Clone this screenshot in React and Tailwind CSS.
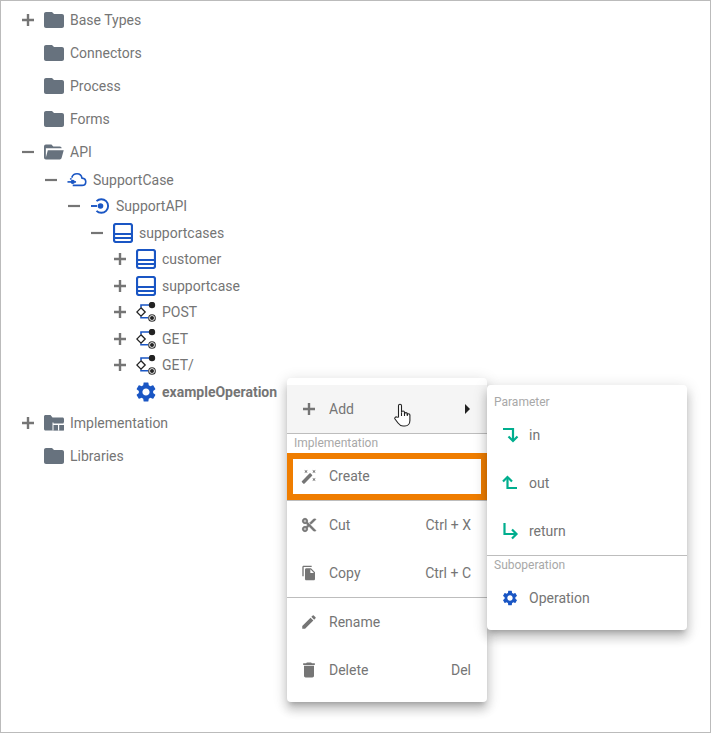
import React from 'react';
import { MdFolder, MdSettings, MdFileCopy, MdEdit, MdDelete, MdArrowRight } from 'react-icons/md';

const Plus = () => (
  <svg width="12" height="12" viewBox="0 0 12 12" className="text-[#757575]">
    <path d="M0 6h12M6 0v12" stroke="currentColor" strokeWidth="2.4" fill="none" />
  </svg>
);

const Minus = () => (
  <svg width="12" height="12" viewBox="0 0 12 12" className="text-[#757575]">
    <path d="M0 6h12" stroke="currentColor" strokeWidth="2.2" fill="none" />
  </svg>
);

const Folder = () => <MdFolder size={24} className="text-[#67727e] -mx-0.5" />;

const FolderOpen = () => (
  <svg width="20" height="20" viewBox="2 2 21.5 20" fill="#67727e">
    <path d="M6.1 10L4 18V8h17a2 2 0 0 0-2-2h-7l-2-2H4a2 2 0 0 0-2 2v12a2 2 0 0 0 2 2h15c.9 0 1.7-.6 1.9-1.5L23.2 10H6.1z" />
  </svg>
);

const FolderTable = () => (
  <svg width="20" height="20" viewBox="0 0 20 20">
    <path d="M0 3.5C0 2.7.7 2 1.5 2h5l2 2.5h10c.8 0 1.5.7 1.500 1.500v10c0 .8-.7 1.500-1.500 1.500h-17C.7 17.500 0 16.800 0 16z" fill="#67727e" />
    <path d="M8.500 9.500h11.500v8h-11.500z" fill="#fff" />
    <path d="M9.500 8.500h10v2h-10zM9.500 12h4.500v5.500h-4.500zM15.200 12h4.800v5.500h-4.800z" fill="#67727e" />
  </svg>
);

const CloudApi = () => (
  <svg width="21" height="20" viewBox="0 0 21 20" fill="none" stroke="#1a56c4" strokeWidth="1.700">
    <path d="M5 7.500C6 4.500 8.500 3.500 10.500 3.500c2.800 0 4.800 2 5.200 4.500 2.400.2 4 1.800 4 3.800 0 2.300-1.800 3.900-4 3.900H6" />
    <path d="M4.800 8.500c-.6.300-1 .6-1.300 1" />
    <path d="M0.500 12h9" />
    <circle cx="6" cy="12" r="2.200" fill="#1a56c4" stroke="none" />
  </svg>
);

const ServiceApi = () => (
  <svg width="20" height="20" viewBox="0 0 20 20" fill="none" stroke="#1a56c4" strokeWidth="1.900">
    <path d="M6.500 5.200A6.800 6.800 0 1 1 6.500 14.800" />
    <path d="M1 10h6" />
    <circle cx="10.500" cy="10" r="2.800" fill="#1a56c4" stroke="none" />
  </svg>
);

const TableIcon = () => (
  <svg width="20" height="20" viewBox="0 0 20 20" fill="none" stroke="#1a56c4">
    <rect x="1" y="1" width="18" height="18" rx="2" strokeWidth="2.200" />
    <path d="M1 11h18M1 15h18" strokeWidth="1.800" />
  </svg>
);

const OperationNode = () => (
  <svg width="20" height="20" viewBox="0 0 20 20" fill="none">
    <path d="M5 5.500V3h8M5 14.500v1.200h7" stroke="#1a56c4" strokeWidth="1.600" />
    <path d="M5 5.800L9.200 10 5 14.200 .800 10z" stroke="#222" strokeWidth="1.300" fill="#fff" />
    <circle cx="16" cy="3" r="3.200" fill="#222" />
    <circle cx="16" cy="16" r="3.300" stroke="#333" strokeWidth="1.100" fill="#fff" />
    <circle cx="16" cy="16" r="2" fill="#222" />
  </svg>
);

const Gear = () => <MdSettings size={24} className="text-[#1a56c4] -mx-0.5" />;

const ArrowIn = () => (
  <svg width="18" height="18" viewBox="0 0 18 18" fill="none" stroke="#00ae8e" strokeWidth="2.200">
    <path d="M2 3h10v11" />
    <path d="M7.500 10.500L12 15l4.500-4.500" />
  </svg>
);

const ArrowOut = () => (
  <svg width="18" height="18" viewBox="0 0 18 18" fill="none" stroke="#00ae8e" strokeWidth="2.200">
    <path d="M16 14H6.500V4" />
    <path d="M2 7.500L6.500 3 11 7.500" />
  </svg>
);

const ArrowReturn = () => (
  <svg width="18" height="18" viewBox="0 0 18 18" fill="none" stroke="#00ae8e" strokeWidth="2.200">
    <path d="M3.500 1v11h12" />
    <path d="M11 7.500L15.500 12 11 16.500" />
  </svg>
);

const Scissors = () => (
  <svg width="16" height="16" viewBox="0 0 24 24" fill="currentColor" stroke="currentColor" strokeWidth="1.200">
    <path d="M9.640 7.640c.23-.5.36-1.050.36-1.640 0-2.210-1.790-4-4-4S2 3.790 2 6s1.790 4 4 4c.59 0 1.140-.13 1.640-.36L10 12l-2.360 2.360C7.140 14.130 6.590 14 6 14c-2.210 0-4 1.790-4 4s1.790 4 4 4 4-1.790 4-4c0-.59-.13-1.140-.36-1.640L12 14l7 7h3v-1L9.640 7.640zM6 8c-1.100 0-2-.89-2-2s.9-2 2-2 2 .89 2 2-.9 2-2 2zm0 12c-1.100 0-2-.89-2-2s.9-2 2-2 2 .89 2 2-.9 2-2 2zM19 3l-6 6 2 2 7-7V3h-3z" />
  </svg>
);

const Wand = () => (
  <svg width="17" height="17" viewBox="0 0 24 24" fill="currentColor">
    <path d="M7.500 5.600L10 7 8.600 4.500 10 2 7.500 3.400 5 2l1.400 2.500L5 7zm12 9.800L17 14l1.400 2.500L17 19l2.500-1.400L22 19l-1.400-2.500L22 14zM22 2l-2.500 1.400L17 2l1.400 2.500L17 7l2.500-1.400L22 7l-1.400-2.500zm-7.630 5.290c-.39-.39-1.020-.39-1.410 0L1.290 18.960c-.39.39-.39 1.020 0 1.410l2.340 2.340c.39.39 1.020.39 1.410 0L16.700 11.050c.39-.39.39-1.020 0-1.410l-2.330-2.350z" />
  </svg>
);

const HandCursor = () => (
  <svg width="18" height="24" viewBox="0 0 18 24" fill="#fff" stroke="#222" strokeWidth="1.100" className="absolute left-[393px] top-[402px]">
    <path d="M4.500 14V2.800a1.500 1.500 0 0 1 3 0V9.500a1.500 1.500 0 0 1 3 0V11a1.400 1.400 0 0 1 2.800 0v1a1.300 1.300 0 0 1 2.600 0v5.500c0 3-2 5.500-5 5.500H9c-2.500 0-3.500-1-5-3l-3-4c-.8-1.200.8-2.800 2-1.800z" />
    <path d="M7.500 9.500v3.500M10.500 10v3M13.300 11v2" />
  </svg>
);

function Row({ toggle, icon, label, bold, tall }) {
  return (
    <div className={`flex items-center ${tall ? 'h-[33px]' : 'h-[26.5px]'}`}>
      <span className="flex w-[24px] shrink-0 items-center justify-center">
        {toggle === 'plus' && <Plus />}
        {toggle === 'minus' && <Minus />}
      </span>
      <span className="ml-1 flex w-[20px] shrink-0 items-center justify-center">{icon}</span>
      <span className={`ml-[6px] text-sm whitespace-nowrap text-[#757575] ${bold ? 'font-bold' : ''}`}>{label}</span>
    </div>
  );
}

function MenuRow({ icon, label, hint, active, children }) {
  return (
    <div className={`flex h-12 items-center pl-[14px] pr-4 ${active ? 'bg-[#f5f5f5]' : ''}`}>
      <span className="flex w-[16px] shrink-0 items-center justify-center text-[#757575]">{icon}</span>
      <span className="ml-[12px] text-sm text-[#757575]">{label}</span>
      {hint && <span className="ml-auto text-sm text-[#757575]">{hint}</span>}
      {children}
    </div>
  );
}

const MenuLabel = ({ children }) => (
  <div className="h-[19px] pl-[7px] text-xs leading-[18px] text-[#a8a8a8]">{children}</div>
);

const Divider = () => <div className="h-px bg-[#bdbdbd]" />;

const menuShadow = 'shadow-[0_5px_5px_-3px_rgba(0,0,0,0.2),0_8px_10px_1px_rgba(0,0,0,0.14),0_3px_14px_2px_rgba(0,0,0,0.12)]';

function SubRow({ icon, label }) {
  return (
    <div className="flex h-12 items-center pl-[14px]">
      <span className="flex w-[18px] shrink-0 items-center justify-center">{icon}</span>
      <span className="ml-[10px] text-sm text-[#757575]">{label}</span>
    </div>
  );
}

export default function App() {
  return (
    <div className="relative h-[733px] w-[711px] overflow-hidden border border-[#bbbbbb] bg-white pl-[15px] pt-[2px] font-['Roboto',sans-serif]">
      <Row tall toggle="plus" icon={<Folder />} label="Base Types" />
      <Row tall icon={<Folder />} label="Connectors" />
      <Row tall icon={<Folder />} label="Process" />
      <Row tall icon={<Folder />} label="Forms" />
      <Row tall toggle="minus" icon={<FolderOpen />} label="API" />
      <div className="-mt-[1.5px] ml-[23px]">
        <Row toggle="minus" icon={<CloudApi />} label="SupportCase" />
        <div className="ml-[23px]">
          <Row toggle="minus" icon={<ServiceApi />} label="SupportAPI" />
          <div className="ml-[23px]">
            <Row toggle="minus" icon={<TableIcon />} label="supportcases" />
            <div className="ml-[23px]">
              <Row toggle="plus" icon={<TableIcon />} label="customer" />
              <Row toggle="plus" icon={<TableIcon />} label="supportcase" />
              <Row toggle="plus" icon={<OperationNode />} label="POST" />
              <Row toggle="plus" icon={<OperationNode />} label="GET" />
              <Row toggle="plus" icon={<OperationNode />} label="GET/" />
              <Row icon={<Gear />} label="exampleOperation" bold />
            </div>
          </div>
        </div>
      </div>
      <div className="mt-[1px]">
        <Row tall toggle="plus" icon={<FolderTable />} label="Implementation" />
        <Row tall icon={<Folder />} label="Libraries" />
      </div>

      <div className={`absolute left-[286px] top-[377px] w-[200px] rounded bg-white pb-2 pt-[7px] ${menuShadow}`}>
        <MenuRow active icon={<Plus />} label="Add">
          <MdArrowRight size={24} className="ml-auto -mr-[8px] text-[#212121]" />
        </MenuRow>
        <Divider />
        <MenuLabel>Implementation</MenuLabel>
        <div className="flex h-[47px] items-center border-[6px] border-[#ef7d00] pb-px pl-[8px]">
          <span className="flex w-[16px] shrink-0 items-center justify-center text-[#757575]">
            <Wand />
          </span>
          <span className="ml-[12px] text-sm text-[#757575]">Create</span>
        </div>
        <Divider />
        <MenuRow icon={<Scissors />} label="Cut" hint="Ctrl + X" />
        <MenuRow icon={<MdFileCopy size={16} />} label="Copy" hint="Ctrl + C" />
        <Divider />
        <MenuRow icon={<MdEdit size={18} className="shrink-0" />} label="Rename" />
        <MenuRow icon={<MdDelete size={20} className="shrink-0" />} label="Delete" hint="Del" />
      </div>

      <div className={`absolute left-[486px] top-[384px] w-[200px] rounded bg-white py-2 ${menuShadow}`}>
        <MenuLabel>Parameter</MenuLabel>
        <div className="-mt-px" />
        <SubRow icon={<ArrowIn />} label="in" />
        <SubRow icon={<ArrowOut />} label="out" />
        <SubRow icon={<ArrowReturn />} label="return" />
        <Divider />
        <MenuLabel>Suboperation</MenuLabel>
        <div className="-mt-px" />
        <SubRow icon={<MdSettings size={18} className="text-[#1a56c4]" />} label="Operation" />
      </div>

      <HandCursor />
    </div>
  );
}
